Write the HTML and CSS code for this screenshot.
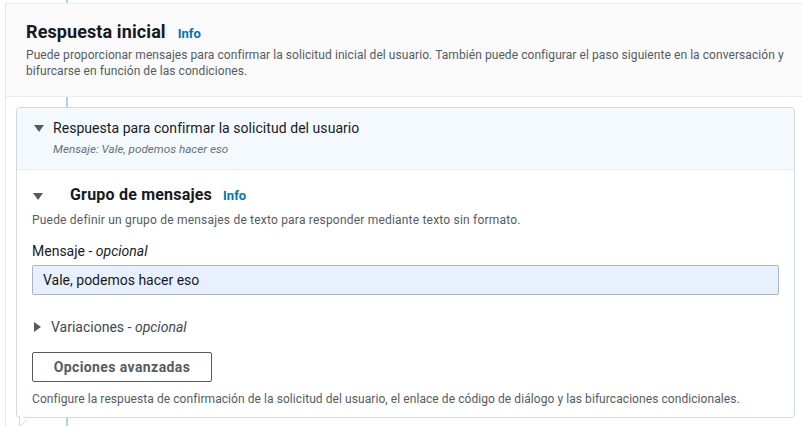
FILE: index.html
```html
<!DOCTYPE html>
<html lang="es">
<head>
<meta charset="utf-8">
<link rel="stylesheet" href="styles.css">
</head>
<body>
<div class="panel">
  <div class="panel-head">
    <h2 class="title">Respuesta inicial <a class="info">Info</a></h2>
    <p class="desc">Puede proporcionar mensajes para confirmar la solicitud inicial del usuario. También puede configurar el paso siguiente en la conversación y bifurcarse en función de las condiciones.</p>
  </div>
  <div class="panel-body">
    <div class="card">
      <div class="card-head">
        <span class="caret down"></span>
        <div class="card-head-text">
          <div class="card-title">Respuesta para confirmar la solicitud del usuario</div>
          <div class="card-sub">Mensaje: Vale, podemos hacer eso</div>
        </div>
      </div>
      <div class="card-body">
        <div class="group-head">
          <span class="caret down"></span>
          <h3 class="group-title">Grupo de mensajes <a class="info">Info</a></h3>
        </div>
        <p class="small-desc group-desc">Puede definir un grupo de mensajes de texto para responder mediante texto sin formato.</p>
        <label class="label">Mensaje - <em>opcional</em></label>
        <div class="input">Vale, podemos hacer eso</div>
        <div class="variations"><span class="caret right"></span><span>Variaciones - <em>opcional</em></span></div>
        <button class="btn">Opciones avanzadas</button>
        <p class="small-desc foot">Configure la respuesta de confirmación de la solicitud del usuario, el enlace de código de diálogo y las bifurcaciones condicionales.</p>
      </div>
      <svg class="tail" width="12" height="12" viewBox="0 0 12 12"><path d="M0.5 0 L0.5 11 L8 3.5" fill="#fff" stroke="#d5dbdb" stroke-width="1"/></svg>
    </div>
  </div>
</div>
</body>
</html>
```

FILE: styles.css
```css
html, body {
  margin: 0;
  padding: 0;
}
body {
  width: 802px;
  height: 426px;
  overflow: hidden;
  background: #fff linear-gradient(to right, transparent 66px, #a6d8ec 66px, #a6d8ec 68px, transparent 68px);
  font-family: Roboto, "Noto Sans", sans-serif;
  color: #16191f;
}
.panel {
  margin: 3px -20px 0 5px;
  border-left: 1px solid #e4e7e7;
  border-top: 1px solid #eaeded;
}
.panel-head {
  background: #fafafa;
  padding: 16px 28px 17px 20px;
  border-bottom: 1px solid #eaeded;
}
.title {
  margin: 0;
  font-size: 18px;
  font-weight: 700;
  letter-spacing: 0.1px;
  line-height: 24px;
  display: flex;
  align-items: baseline;
  gap: 12px;
}
.info {
  color: #0073bb;
  font-size: 13px;
  font-weight: 700;
  letter-spacing: 0;
}
.desc {
  margin: 1px 0 0;
  font-size: 12px;
  letter-spacing: 0.07px;
  line-height: 16px;
  color: #545b64;
}
.panel-body {
  padding: 10px 26px 12px 10px;
}
.card {
  position: relative;
  width: 777px;
  border: 1px solid #d5dbdb;
  border-radius: 4px;
  background: #fff;
}
.card-head {
  background: #f4f9fd;
  border-bottom: 1px solid #eaeded;
  border-radius: 4px 4px 0 0;
  padding: 11px 15px 12px 17px;
  display: flex;
  gap: 9px;
}
.caret {
  width: 0;
  height: 0;
  flex: none;
}
.caret.down {
  margin-top: 6px;
  border-left: 5px solid transparent;
  border-right: 5px solid transparent;
  border-top: 7px solid #545b64;
}
.caret.right {
  border-top: 5px solid transparent;
  border-bottom: 5px solid transparent;
  border-left: 7px solid #545b64;
}
.card-title {
  font-size: 14px;
  letter-spacing: 0.05px;
  line-height: 18px;
}
.card-sub {
  font-size: 11.7px;
  font-style: italic;
  color: #687078;
  line-height: 16px;
  margin-top: 4px;
}
.card-body {
  padding: 14px 15px 10px 15px;
}
.group-head {
  display: flex;
  align-items: center;
  gap: 27px;
  padding-left: 1px;
}
.group-head .caret.down {
  margin-top: 2px;
}
.group-title {
  margin: 0;
  font-size: 16px;
  font-weight: 700;
  letter-spacing: 0.2px;
  line-height: 22px;
  display: flex;
  align-items: baseline;
  gap: 11px;
}
.small-desc {
  margin: 5px 0 0;
  font-size: 12px;
  letter-spacing: 0.07px;
  line-height: 16px;
  color: #545b64;
}
.small-desc.group-desc {
  letter-spacing: 0.2px;
}
.label {
  display: block;
  margin-top: 14px;
  font-size: 14px;
  line-height: 18px;
}
.input {
  margin-top: 5px;
  height: 28px;
  border: 1px solid #aab7b8;
  border-radius: 2px;
  background: #e8f0fe;
  padding: 0 10px;
  font-size: 14px;
  line-height: 28px;
}
.variations {
  margin-top: 23px;
  display: flex;
  align-items: center;
  gap: 10px;
  padding-left: 2px;
  font-size: 14px;
  line-height: 18px;
  color: #414750;
}
.btn {
  display: block;
  margin-top: 16px;
  width: 180px;
  height: 30px;
  border: 1px solid #545b64;
  border-radius: 2px;
  background: #fff;
  font-family: inherit;
  font-size: 14px;
  font-weight: 700;
  letter-spacing: 0.4px;
  color: #545b64;
  padding: 0;
}
.small-desc.foot {
  margin-top: 9px;
}
.tail {
  position: absolute;
  left: 2px;
  bottom: -11px;
}
```
